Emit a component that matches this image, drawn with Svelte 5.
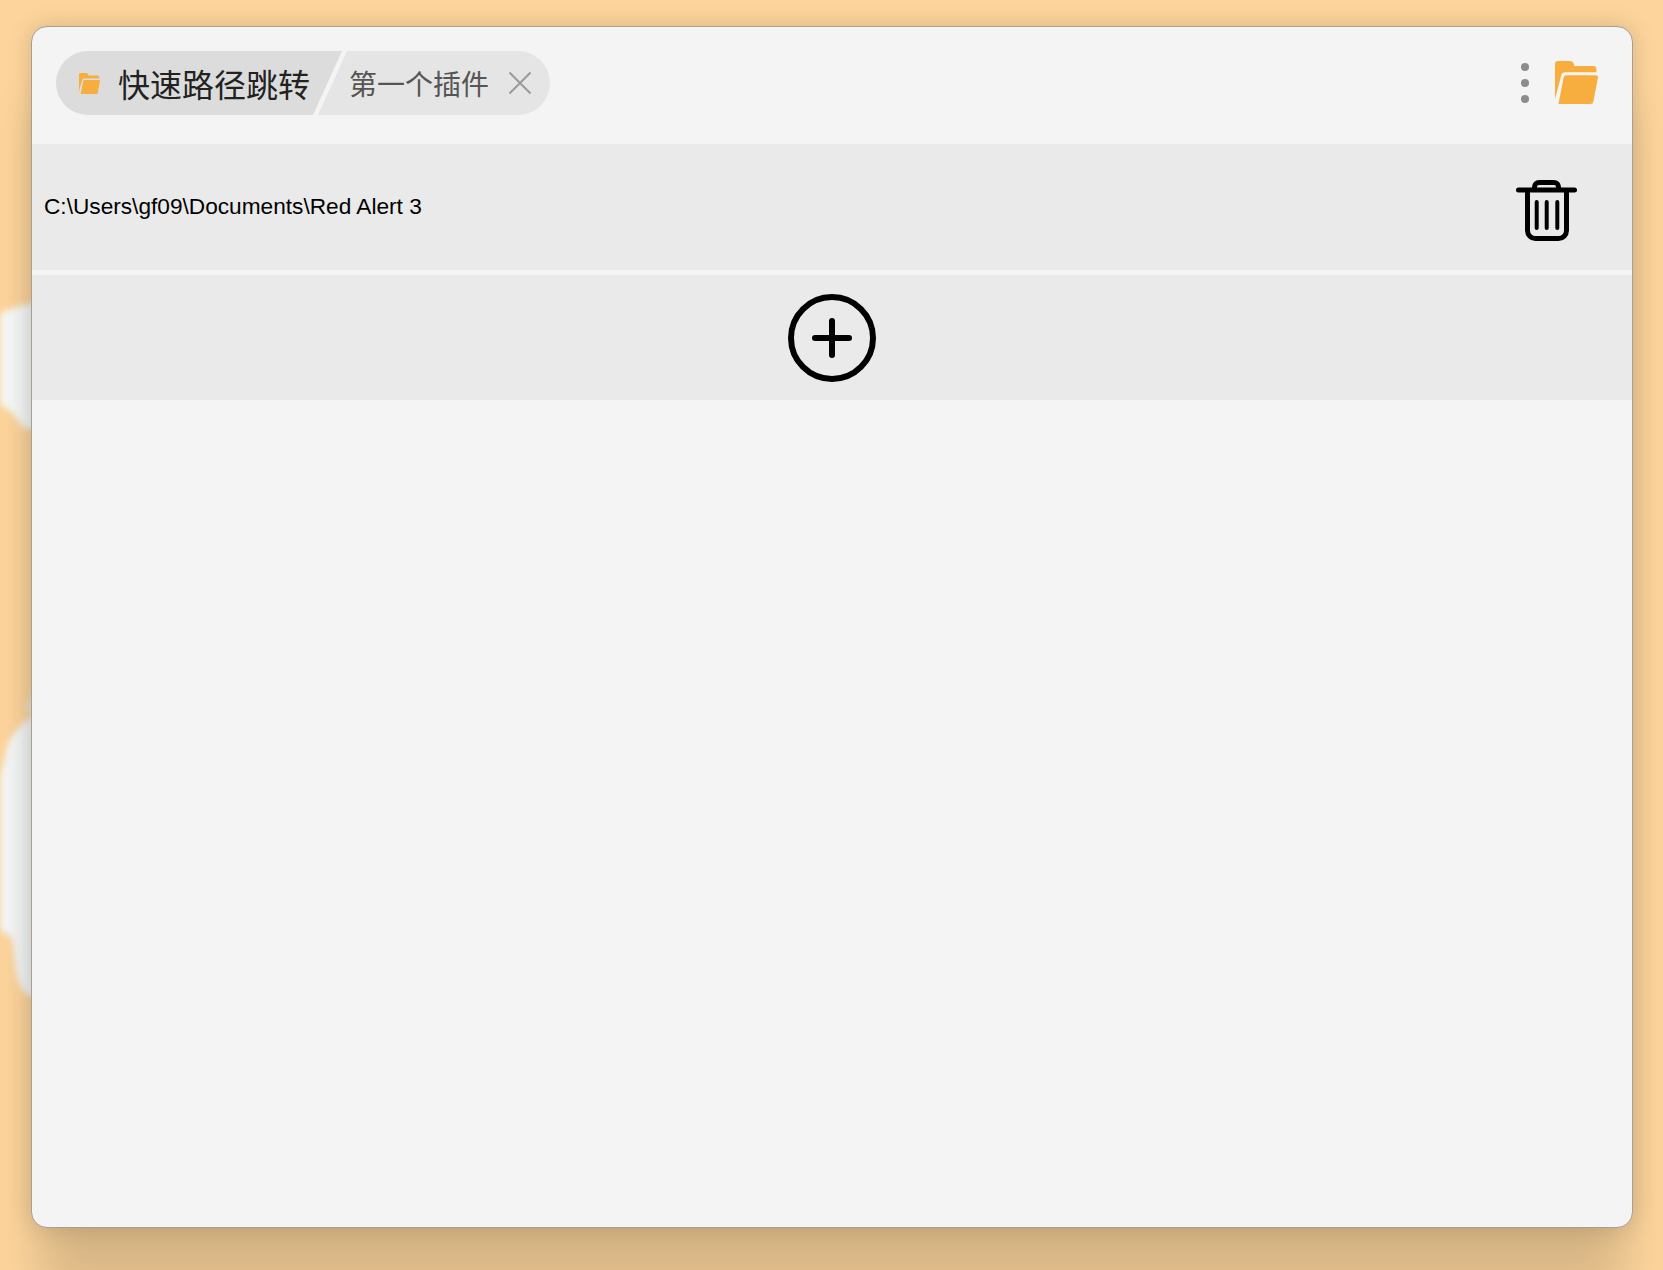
<script lang="ts">
  const path = "C:\\Users\\gf09\\Documents\\Red Alert 3";
</script>

<div class="page">
  <!-- blurred clouds of the wallpaper, only visible left of the window -->
  <svg class="clouds" width="60" height="1270" viewBox="0 0 60 1270" aria-hidden="true">
    <path d="M-6 316 C6 310 18 306 44 300 L44 430 L24 428 C18 420 12 412 6 408 C2 406 -2 402 -6 400 Z" fill="#f6f9f7" />
    <path d="M-6 800 C0 780 4 760 8 743 C14 732 22 722 44 708 L44 998 L28 996 C20 988 16 978 15 964 C14 952 14 942 10 936 C6 934 0 930 -6 924 Z" fill="#f5f6f6" />
    <path d="M26 712 C27 704 28 696 44 686 L44 712 Z" fill="#efe6d8" />
  </svg>

  <main class="card">
    <header class="head">
      <div class="crumbs">
        <div class="crumb root">
          <svg class="folder small" viewBox="0 0 42 42" aria-hidden="true">
            <path d="M0 37V3a3 3 0 0 1 3-3h12a4 4 0 0 1 3.500 3l.5 2h19a3 3 0 0 1 2.500 3v3H10a4 4 0 0 0-4 3.500Z" />
            <path d="M3.400 42l5-26a3 3 0 0 1 3-2H40a2 2 0 0 1 2 2l-4.500 23.500a3 3 0 0 1-3 2.500Z" />
          </svg>
          <span>快速路径跳转</span>
        </div>
        <div class="crumb leaf">
          <span>第一个插件</span>
          <svg class="close" viewBox="0 0 24 24" aria-hidden="true">
            <path d="M1.500 1.500l21 21M22.500 1.500l-21 21" />
          </svg>
        </div>
      </div>
      <div class="tools">
        <div class="dots"><i></i><i></i><i></i></div>
        <svg class="folder big" viewBox="0 0 42 42" aria-hidden="true">
          <path d="M0 37V3a3 3 0 0 1 3-3h12a4 4 0 0 1 3.500 3l.5 2h19a3 3 0 0 1 2.500 3v3H10a4 4 0 0 0-4 3.500Z" />
          <path d="M3.400 42l5-26a3 3 0 0 1 3-2H40a2 2 0 0 1 2 2l-4.500 23.500a3 3 0 0 1-3 2.500Z" />
        </svg>
      </div>
    </header>

    <div class="row">
      <span class="path">{path}</span>
      <svg class="trash" viewBox="0 0 61 61" aria-hidden="true">
        <path d="M2.500 10h56M18.500 10V7a4.500 4.500 0 0 1 4.500-4.500h15A4.500 4.500 0 0 1 42.500 7v3M11.500 10v40.500a8 8 0 0 0 8 8h23a8 8 0 0 0 8-8V10" />
        <path class="bars" d="M20.700 22v26M30.700 22v26M41.300 22v26" />
      </svg>
    </div>

    <div class="row add">
      <svg class="plus" viewBox="0 0 88 88" aria-hidden="true">
        <circle cx="44" cy="44" r="41" />
        <path d="M27 44h34M44 27v34" />
      </svg>
    </div>
  </main>
</div>

<style>
  :global(body) {
    margin: 0;
  }
  .page {
    position: relative;
    box-sizing: border-box;
    width: 1663px;
    height: 1270px;
    padding: 26px 30px 42px 31px;
    background: #fdd59c;
    overflow: hidden;
  }
  .clouds {
    position: absolute;
    left: 0;
    top: 0;
    filter: blur(3px);
  }
  .card {
    position: relative;
    box-sizing: border-box;
    height: 100%;
    background: #f4f4f4;
    border: 1px solid #a8a08f;
    border-radius: 16px;
    box-shadow:
      0 0 24px rgba(0, 0, 0, 0.16),
      0 70px 50px -8px rgba(0, 0, 0, 0.15);
    overflow: hidden;
    font-family: "Liberation Sans", "Noto Sans CJK SC", sans-serif;
  }
  .head {
    box-sizing: border-box;
    height: 117px;
    display: flex;
    align-items: flex-start;
    justify-content: space-between;
    padding: 24px 34px 0 24px;
  }
  .crumbs {
    display: flex;
    height: 64px;
    border-radius: 32px;
    overflow: hidden;
    font-family: "Noto Sans CJK SC", sans-serif;
    white-space: nowrap;
  }
  .crumb {
    display: flex;
    align-items: center;
    flex: none;
  }
  .root {
    width: 286px;
    padding-left: 23px;
    box-sizing: border-box;
    gap: 18px;
    background: #dcdcdc;
    font-size: 32px;
    color: #222;
    clip-path: polygon(0 0, 100% 0, 257px 100%, 0 100%);
  }
  .leaf {
    width: 232px;
    margin-left: -24px;
    padding-left: 31px;
    box-sizing: border-box;
    gap: 19px;
    background: #e5e5e5;
    font-size: 28px;
    color: #555;
    clip-path: polygon(29px 0, 100% 0, 100% 100%, 0 100%);
  }
  .folder path {
    fill: #f7ae3e;
  }
  .folder.small {
    width: 21px;
    height: 21px;
  }
  .folder.big {
    width: 43px;
    height: 43px;
  }
  .close {
    width: 24px;
    height: 24px;
    flex: none;
    fill: none;
    stroke: #999;
    stroke-width: 2;
  }
  .tools {
    display: flex;
    align-items: center;
    gap: 26px;
    padding-top: 10px;
  }
  .dots {
    display: flex;
    flex-direction: column;
    gap: 8px;
  }
  .dots i {
    width: 8px;
    height: 8px;
    border-radius: 50%;
    background: #8c8c8c;
  }
  .row {
    height: 126px;
    display: flex;
    align-items: center;
    justify-content: space-between;
    box-sizing: border-box;
    padding: 0 55px 0 12px;
    background: #eaeaea;
    margin-bottom: 5px;
  }
  .path {
    font-size: 22.67px;
    color: #000;
    margin-top: -2px;
  }
  .trash {
    width: 61px;
    height: 61px;
    margin-top: 7px;
    fill: none;
    stroke: #000;
    stroke-width: 5;
    stroke-linecap: round;
  }
  .trash .bars {
    stroke-width: 4;
  }
  .row.add {
    height: 125px;
    justify-content: center;
    padding: 0;
    margin: 0;
  }
  .plus {
    width: 88px;
    height: 88px;
    fill: none;
    stroke: #000;
    stroke-width: 6;
    stroke-linecap: round;
  }
</style>
